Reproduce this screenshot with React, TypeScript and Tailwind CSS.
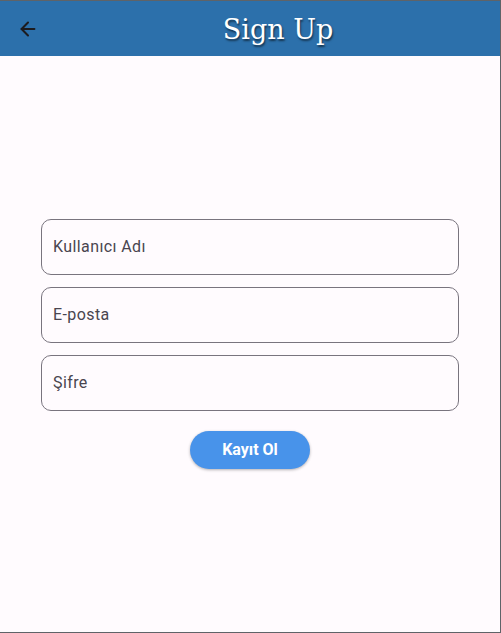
import { ArrowLeft } from 'lucide-react';

const fields = ['Kullanıcı Adı', 'E-posta', 'Şifre'];

export default function App() {
  return (
    <div className="flex h-[633px] w-[501px] flex-col border-t border-r border-b border-[#5f6368] bg-[#fffbfe] font-['Roboto',sans-serif]">
      <header className="flex h-[55px] shrink-0 items-center bg-[#2c70ab]">
        <button type="button" className="flex w-[56px] justify-center pt-[1px] text-[#1c1b1f]">
          <ArrowLeft size={22} strokeWidth={2.2} />
        </button>
        <h1 className="flex-1 pt-[3px] text-center font-['DejaVu_Serif',serif] text-[27px] text-white [text-shadow:1px_2px_2px_rgba(0,0,0,0.55)]">
          Sign Up
        </h1>
      </header>

      <main className="flex flex-1 flex-col justify-center px-[41px]">
        <div className="flex flex-col gap-3">
          {fields.map((f) => (
            <div
              key={f}
              className="flex h-[56px] items-center rounded-[10px] border border-[#79747e] px-[11px] text-base tracking-[0.4px] text-[#49454f]"
            >
              {f}
            </div>
          ))}
        </div>
        <div className="mt-5 flex justify-center">
          <button
            type="button"
            className="h-[38px] w-[120px] rounded-full bg-[#4893ea] text-base font-bold text-white shadow-[0_1px_3px_rgba(0,0,0,0.3)]"
          >
            Kayıt Ol
          </button>
        </div>
      </main>
    </div>
  );
}
